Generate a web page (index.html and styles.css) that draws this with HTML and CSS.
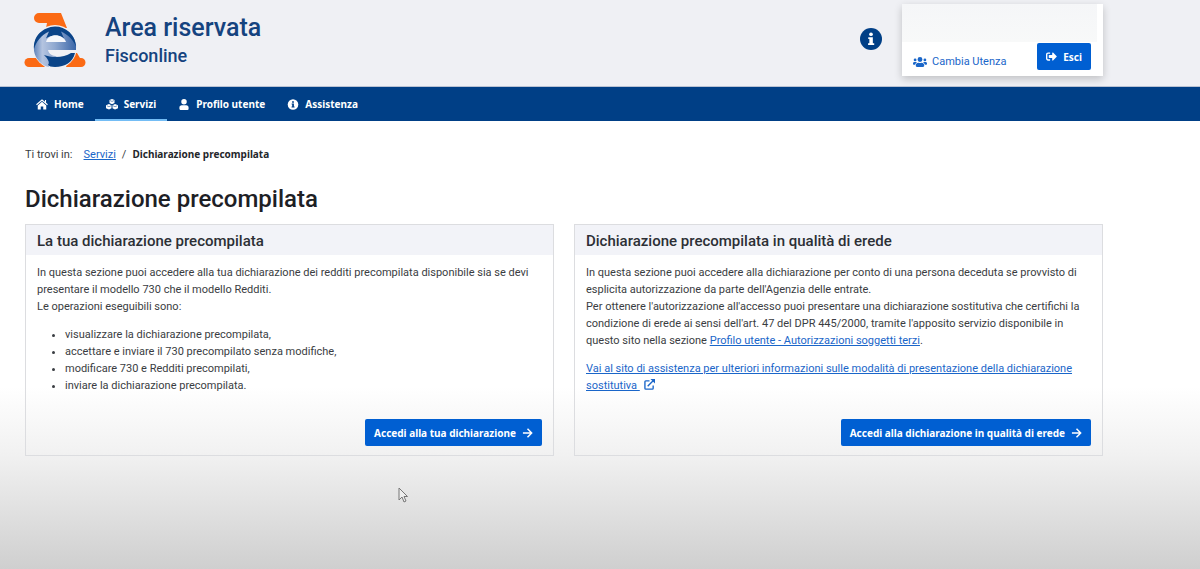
FILE: index.html
```
<!DOCTYPE html>
<html lang="it">
<head>
<meta charset="utf-8">
<title>Area riservata - Dichiarazione precompilata</title>
<link rel="stylesheet" href="styles.css">
</head>
<body>
<header class="site-header">
  <div class="brand">
    <svg class="logo" viewBox="0 0 62 56" aria-hidden="true">
      <defs>
        <linearGradient id="ring" x1="0" y1="0" x2="1" y2="0">
          <stop offset="0" stop-color="#5f84bb"/><stop offset="0.2" stop-color="#b4c4e0"/><stop offset="0.5" stop-color="#8fa8d0"/><stop offset="1" stop-color="#3a66a8"/>
        </linearGradient>
      </defs>
      <path d="M15 1h22l6 15H22l1-5h-8a5 5 0 0 1 0-10z" fill="#fb6a14"/>
      <path d="M5 46h8l8 9H5a4.500 4.500 0 0 1 0-9z" fill="#fb6a14"/>
      <path d="M46 41h7l3 5h1a4.500 4.500 0 0 1 0 9H42z" fill="#fb6a14"/>
      <circle cx="31" cy="35" r="22" fill="#eff0f4"/>
      <path d="M12 45A21 21 0 0 1 17 20l14-5 14 5a21 21 0 0 1 7 18H24c1 4 4 6 9 6-6 3-10 6-8 11-6-1-10-5-13-10z" fill="url(#ring)"/>
      <path d="M10 37C9 24 19 15 31 14.500c11 0 20 8 21 20-3-7-8-12-15-15l3 7c-5-4-13-4-18 0l3-7c-8 4-13 10-15 17.500z" fill="#0a4488"/>
      <path d="M22 30c2-9 17-9 20 0z" fill="#f5f7fb"/>
      <path d="M20 43c8 3 20 3 27-2h4c-2 9-10 14-20 14-4 0-6-1-7-2 2-3 0-6-4-10z" fill="#0a4488"/>
    </svg>
    <div class="brand-text">
      <p class="brand-title">Area riservata</p>
      <p class="brand-sub">Fisconline</p>
    </div>
  </div>
  <div class="header-tools">
    <button class="info-button" type="button" aria-label="Informazioni">
      <svg viewBox="0 0 24 24" aria-hidden="true"><circle cx="12" cy="12" r="12" fill="#003f86"/><circle cx="12" cy="6.800" r="2" fill="#fff"/><path d="M9 10h5v6.500h1.500v2H8.800v-2h1.400v-4.500H9z" fill="#fff"/></svg>
    </button>
    <div class="user-box">
      <div class="user-name"></div>
      <div class="user-actions">
        <a class="switch-user" href="#">
          <svg viewBox="0 0 640 512" aria-hidden="true"><path fill="currentColor" d="M96 224a64 64 0 1 0 0-128 64 64 0 0 0 0 128zm448 0a64 64 0 1 0 0-128 64 64 0 0 0 0 128zm32 32h-64c-18 0-34 7-45 19 40 22 69 61 75 109h66c18 0 32-14 32-32v-32c0-35-29-64-64-64zm-256 0a112 112 0 1 0 0-224 112 112 0 0 0 0 224zm77 32h-8a155 155 0 0 1-138 0h-8c-64 0-115 52-115 115v29c0 27 21 48 48 48h288c27 0 48-21 48-48v-29c0-63-51-115-115-115zm-224-13c-11-12-27-19-45-19H64c-35 0-64 29-64 64v32c0 18 14 32 32 32h66c6-48 35-87 75-109z"/></svg>
          Cambia Utenza</a>
        <button class="btn" type="button">
          <svg class="icon" viewBox="0 0 512 512" aria-hidden="true"><path fill="currentColor" d="M497 273L329 441c-15 15-41 5-41-17v-96H152c-13 0-24-11-24-24v-96c0-13 11-24 24-24h136V88c0-21 26-32 41-17l168 168c9 9 9 25 0 34zM192 436v-40c0-7-5-12-12-12H96c-18 0-32-14-32-32V160c0-18 14-32 32-32h84c7 0 12-5 12-12V76c0-7-5-12-12-12H96c-53 0-96 43-96 96v192c0 53 43 96 96 96h84c7 0 12-5 12-12z"/></svg>
          Esci</button>
      </div>
    </div>
  </div>
</header>
<nav class="main-nav" aria-label="Principale">
  <a class="nav-item" href="#">
    <svg class="icon-nav" viewBox="0 0 24 22" aria-hidden="true"><path fill="currentColor" d="M12 5.500L3.500 13v8h6v-6h5v6h6v-8z"/><path fill="none" stroke="currentColor" stroke-width="2.200" d="M1 11.500L12 2l11 9.500M19 2v6"/></svg>
    Home</a>
  <a class="nav-item active" href="#" aria-current="page">
    <svg class="icon-nav" viewBox="0 0 24 22" aria-hidden="true"><path fill="currentColor" d="M12 0l5 2v6l-5 2.500L7 8V2zM6 10l5 2.500v6L6 21l-6-2.500v-6zM18 10l6 2.500v6L18 21l-5-2.500v-6z"/><path fill="none" stroke="#003f86" stroke-width="1" d="M8 3l4 2 4-2M1.500 13.500L6 15.500l4-2M14 13.500l4 2 4.500-2"/></svg>
    Servizi</a>
  <a class="nav-item" href="#">
    <svg class="icon-nav" viewBox="0 0 22 24" aria-hidden="true"><path fill="currentColor" d="M11 12a6 6 0 1 0 0-12 6 6 0 0 0 0 12zM6 13.500h10c3 0 5 2 5 5V22c0 1-1 2-2 2H3c-1 0-2-1-2-2v-3.500c0-3 2-5 5-5z"/></svg>
    Profilo utente</a>
  <a class="nav-item" href="#">
    <svg class="icon-nav" viewBox="0 0 24 24" aria-hidden="true"><circle cx="12" cy="12" r="11.500" fill="currentColor"/><circle cx="12" cy="6.500" r="2" fill="#003f86"/><path d="M9 10h5v6.500h1.500v2H8.800v-2h1.400v-4.500H9z" fill="#003f86"/></svg>
    Assistenza</a>
</nav>
<main class="content">
  <nav class="breadcrumb" aria-label="Percorso">
    <span class="crumb-label">Ti trovi in:</span>
    <a href="#">Servizi</a>
    <span>/</span>
    <strong>Dichiarazione precompilata</strong>
  </nav>
  <h1 class="page-title">Dichiarazione precompilata</h1>
  <div class="cards">
    <section class="card">
      <h2 class="card-title">La tua dichiarazione precompilata</h2>
      <div class="card-body">
        <p>In questa sezione puoi accedere alla tua dichiarazione dei redditi precompilata disponibile sia se devi presentare il modello 730 che il modello Redditi.<br>Le operazioni eseguibili sono:</p>
        <ul class="operations">
          <li>visualizzare la dichiarazione precompilata,</li>
          <li>accettare e inviare il 730 precompilato senza modifiche,</li>
          <li>modificare 730 e Redditi precompilati,</li>
          <li>inviare la dichiarazione precompilata.</li>
        </ul>
      </div>
      <div class="card-footer">
        <button class="btn" type="button">Accedi alla tua dichiarazione
          <svg class="icon arrow" viewBox="0 0 24 24" aria-hidden="true"><path fill="none" stroke="currentColor" stroke-width="3.500" d="M1 12h20M12 2l10 10-10 10"/></svg></button>
      </div>
    </section>
    <section class="card">
      <h2 class="card-title">Dichiarazione precompilata in qualità di erede</h2>
      <div class="card-body">
        <p>In questa sezione puoi accedere alla dichiarazione per conto di una persona deceduta se provvisto di esplicita autorizzazione da parte dell'Agenzia delle entrate.<br>Per ottenere l'autorizzazione all'accesso puoi presentare una dichiarazione sostitutiva che certifichi la condizione di erede ai sensi dell'art. 47 del DPR 445/2000, tramite l'apposito servizio disponibile in questo sito nella sezione <a href="#">Profilo utente - Autorizzazioni soggetti terzi</a>.</p>
        <p><a href="#">Vai al sito di assistenza per ulteriori informazioni sulle modalità di presentazione della dichiarazione sostitutiva&nbsp;<svg class="icon external" viewBox="0 0 24 24" aria-hidden="true"><path fill="none" stroke="currentColor" stroke-width="3" d="M12 4H4a2 2 0 0 0-2 2v14a2 2 0 0 0 2 2h14a2 2 0 0 0 2-2v-6M8 16L20 4"/><path fill="currentColor" d="M14 0h10v10z"/></svg></a></p>
      </div>
      <div class="card-footer">
        <button class="btn" type="button">Accedi alla dichiarazione in qualità di erede
          <svg class="icon arrow" viewBox="0 0 24 24" aria-hidden="true"><path fill="none" stroke="currentColor" stroke-width="3.500" d="M1 12h20M12 2l10 10-10 10"/></svg></button>
      </div>
    </section>
  </div>
</main>
<svg class="pointer" viewBox="0 0 10 16" aria-hidden="true"><path d="M1 1v12l3-3 2 5 2-1-2-4.500h3.500z" fill="#eee" stroke="#777"/></svg>
</body>
</html>
```
FILE: styles.css
```
* { box-sizing: border-box; }
html { min-height: 100%; background: linear-gradient(#fff 0, #fff 68%, #f1f1f1 80%, #cfcfcf 100%); }
body { margin: 0; font: 11px/17px Roboto, sans-serif; color: #3a3d42; }
p, h1, h2, ul { margin: 0; }
a { color: #1a66c9; }
svg { display: block; flex: none; }

.site-header { display: flex; justify-content: space-between; align-items: flex-start; min-height: 87px; padding: 4px 97px 8px 24px; background: #eff0f4; border-bottom: 1px solid #b9c2d3; }
.brand { display: flex; gap: 19px; padding-top: 8px; }
.logo { width: 62px; height: 56px; }
.brand-text { color: #15437f; font-weight: 500; }
.brand-title { font-size: 25px; line-height: 32px; }
.brand-sub { font-size: 18px; line-height: 24px; }
.header-tools { display: flex; gap: 20px; }
.info-button { width: 22px; height: 22px; margin-top: 24px; padding: 0; border: 0; background: none; }
.user-box { width: 201px; background: #fff; box-shadow: 0 3px 8px #0003; }
.user-name { height: 38px; margin-right: 6px; background: linear-gradient(#f5f6f8, #f8f9f9); }
.user-actions { display: flex; justify-content: space-between; align-items: flex-start; padding: 1px 12px 6px 11px; }
.switch-user { display: flex; align-items: center; gap: 5px; margin-top: 10px; text-decoration: none; }
.switch-user svg { width: 14px; height: 12px; }

.btn { display: flex; align-items: center; gap: 6px; min-height: 27px; padding: 4px 9px; border: 0; border-radius: 2px; background: #005fd2; color: #fff; font: 700 10px/16px "Noto Sans", sans-serif; }
.icon { width: 11px; height: 11px; }
.icon.arrow { width: 11px; height: 10px; }
.icon.external { display: inline-block; margin-left: 4px; vertical-align: -1px; }

.main-nav { display: flex; min-height: 34px; padding-left: 25px; background: #003f86; font-family: "Noto Sans", sans-serif; font-size: 10px; }
.nav-item { display: flex; align-items: center; gap: 6px; padding: 2px 11px 0; border-bottom: 2px solid transparent; color: #fff; font-weight: 700; text-decoration: none; }
.nav-item.active { border-color: #74bdf5; }
.icon-nav { width: 12px; height: 11px; }

.content { padding: 25px 97px 0 25px; }
.breadcrumb { display: flex; gap: 6px; }
.crumb-label { margin-right: 5px; }
.breadcrumb strong { color: #24272b; font-size: 10px; font-family: "Noto Sans", sans-serif; }
.page-title { margin-top: 20px; color: #1d2025; font-size: 24px; line-height: 32px; font-weight: 500; }
.cards { display: grid; grid-template-columns: 1fr 1fr; gap: 20px; margin-top: 9px; }
.card { display: flex; flex-direction: column; border: 1px solid #dcdde0; }
.card-title { padding: 5px 11px 3px; background: #f2f3f8; color: #2c2f35; font-size: 15px; line-height: 22px; font-weight: 500; }
.card-body { display: grid; gap: 11px; padding: 9px 11px 0; }
.operations { padding-left: 28px; }
.card-footer { display: flex; justify-content: flex-end; margin-top: auto; padding: 25px 11px 9px; }
.pointer { position: absolute; left: 398px; top: 487px; width: 10px; height: 16px; }
```
